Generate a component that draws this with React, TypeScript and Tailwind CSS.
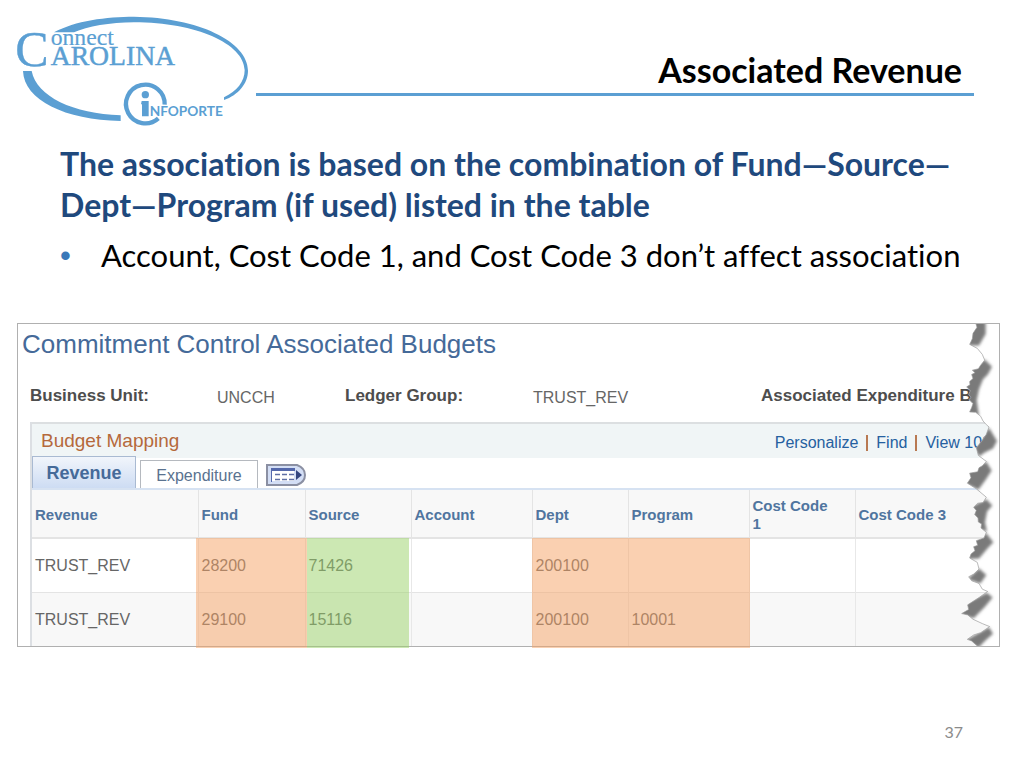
const columns = [
  { label: "Revenue", width: "w-[166px]" },
  { label: "Fund", width: "w-[107px]" },
  { label: "Source", width: "w-[106px]" },
  { label: "Account", width: "w-[121px]" },
  { label: "Dept", width: "w-[96px]" },
  { label: "Program", width: "w-[121px]" },
  { label: "Cost Code 1", width: "w-[106px]" },
  { label: "Cost Code 3", width: "w-auto" },
];

const rows = [
  ["TRUST_REV", "28200", "71426", "", "200100", "", "", ""],
  ["TRUST_REV", "29100", "15116", "", "200100", "10001", "", ""],
];

const links = ["Personalize", "Find", "View 100"];

const tear =
  "M231 42 L234 52 L222 70 L220 86 L212 103 L235 115 L250 133 L257 150 L245 165 L238 176 L220 180 L228 188 L218 193 L222 205 L212 214 L213 224 L203 230 L214 242 L209 252 L216 262 L210 268 L222 280 L218 292 L212 305 L230 306 L245 318 L252 332 L262 343 L270 350 L262 372 L250 390 L232 412 L238 435 L262 453 L250 466 L240 472 L236 484 L212 488 L216 502 L205 518 L232 535 L262 560 L252 576 L236 578 L224 590 L232 600 L227 612 L237 622 L238 634 L248 640 L246 652 L262 665 L255 682 L232 690 L236 704 L224 708 L228 720 L216 730 L212 742 L235 755 L240 775 L224 790 L209 798 L218 810 L240 818 L250 835 L266 842 L240 860 L206 882 L209 896 L188 908 L206 912 L222 925 L250 938 L272 947 L245 965 L224 972 L205 985 L218 990 L235 1005";

const shadows = [
  "M225 30 L260 36 L260 72 L240 106 L205 106 Z",
  "M257 148 L279 170 L267 192 L252 207 L240 237 L233 270 L240 317 L205 310 L195 225 L225 170 Z",
  "M270 352 L294 392 L282 414 L257 426 L240 438 L225 412 Z",
  "M262 454 L278 480 L260 508 L238 538 L200 520 L205 484 Z",
  "M262 566 L280 585 L264 603 L258 635 L264 663 L240 655 L215 590 Z",
  "M262 668 L283 695 L264 715 L240 743 L205 745 L220 690 Z",
  "M240 773 L262 793 L244 818 L205 805 Z",
  "M264 846 L281 860 L257 888 L224 922 L182 910 L205 875 Z",
  "M270 949 L282 968 L260 988 L238 1010 L200 988 Z",
];

function Logo() {
  return (
    <svg viewBox="0 0 768 390" className="h-[130px] w-64 shrink-0" fill="#5b9fd3" role="img" aria-label="Connect Carolina Infoporte">
      <path d="M162 97 C225 62 320 50 402 50 C595 52 744 125 744 212 C744 250 715 285 672 300 L672 292 C711 273 734 245 734 210 C732 132 590 67 402 67 C330 67 262 80 222 97 Z" />
      <path d="M69 213 H95 C110 290 220 341 362 346 V363 C195 360 72 300 69 213 Z" />
      <path d="M494 314 A58 58 0 1 0 475 355" fill="none" stroke="#5b9fd3" strokeWidth="13" />
      <circle cx="436" cy="284" r="11" />
      <path d="M425 303 H446 V349 H426 V313 H423 Z" />
      <g fontFamily="Liberation Serif, serif" stroke="#5b9fd3">
        <text x="46" y="198" fontSize="150" strokeWidth="1">C</text>
        <text x="152" y="134" fontSize="71" strokeWidth="0.5">onnect</text>
        <text x="152" y="196" fontSize="83" strokeWidth="1.5">AROLINA</text>
      </g>
      <text x="449" y="347" fontSize="41" fontWeight="700" fontFamily="Lato, sans-serif">NFOPORTE</text>
    </svg>
  );
}

function TornEdge() {
  return (
    <svg
      viewBox="180 42 120 963"
      preserveAspectRatio="none"
      className="pointer-events-none absolute top-0 right-0 h-full w-10"
      aria-hidden="true"
    >
      <defs>
        <clipPath id="beyond-tear">
          <path d={`${tear} L300 1005 L300 42 Z`} />
        </clipPath>
        <filter id="soft">
          <feGaussianBlur stdDeviation="5" />
        </filter>
      </defs>
      <path d={`${tear} L300 1005 L300 42 Z`} fill="#fff" />
      <g clipPath="url(#beyond-tear)">
        <g fill="#7a7a7a" filter="url(#soft)">
          {shadows.map((d) => (
            <path key={d} d={d} />
          ))}
        </g>
      </g>
      <path d={tear} fill="none" stroke="#999" strokeWidth="2" />
    </svg>
  );
}

function DownloadIcon() {
  return (
    <svg viewBox="0 0 40 22" className="h-[22px] w-10" aria-hidden="true">
      <path d="M1 1 H31 Q39 4 39 11 Q39 18 31 21 H1 Z" fill="#d3def5" stroke="#8b90a3" strokeWidth="2" />
      <path d="M5 4 H29 V7 H5 Z" fill="#5468ab" />
      <path d="M5 7 H28 V17 H5 Z" fill="#fff" />
      <path d="M5.500 7 V18" stroke="#5468ab" />
      <path d="M9 10.500 H28 M9 15.500 H28" stroke="#5f6fa5" strokeWidth="1.500" strokeDasharray="5 2" />
      <path d="M30 6 L36 11 L30 16 Z" fill="#34457f" />
    </svg>
  );
}

function BudgetPanel() {
  return (
    <section className="relative mt-[47px] mr-6 ml-[17px] border border-[#b0b0b0] bg-white font-['Liberation_Sans',sans-serif] text-base text-[#666]">
      <h2 className="pt-1 pl-1 text-[26px] leading-8 text-[#456a99]">Commitment Control Associated Budgets</h2>
      <dl className="mt-6 flex h-[38px] pl-3 leading-6 whitespace-nowrap">
        <dt className="w-[187px] text-[17px] font-bold text-[#4d4d4d]">Business Unit:</dt>
        <dd className="w-32 pt-0.5">UNCCH</dd>
        <dt className="w-[188px] text-[17px] font-bold text-[#4d4d4d]">Ledger Group:</dt>
        <dd className="w-[228px] pt-0.5">TRUST_REV</dd>
        <dt className="w-0 flex-1 text-[17px] font-bold text-[#4d4d4d]">Associated Expenditure B</dt>
      </dl>

      <div className="ml-3 border-l-2 border-[#dcdfe3]">
        <div className="flex h-9 items-center justify-between border-t-2 border-[#dcdfe1] bg-[#f0f5f6] pr-2 pl-[9px]">
          <h3 className="text-[19px] text-[#b5693c]">Budget Mapping</h3>
          <nav className="flex items-center gap-2 pt-1 text-[#2560a0]">
            {links.map((link, i) => (
              <span key={link} className="flex items-center gap-2">
                {i > 0 && <span className="h-4 w-0.5 bg-[#b87952]" />}
                <a href="#">{link}</a>
              </span>
            ))}
          </nav>
        </div>

        <div className="flex h-8 items-end border-b-2 border-[#d6e2f2]">
          <button className="h-8 w-[104px] border border-b-0 border-[#a9bad2] bg-linear-to-b from-[#f1f5fb] to-[#cddcf3] text-lg font-bold text-[#456a99]">
            Revenue
          </button>
          <button className="ml-1 h-7 w-[118px] border border-b-0 border-[#b5b9bf] bg-white pt-0.5 text-[#5a728f]">
            Expenditure
          </button>
          <button className="ml-2 pb-0.5" aria-label="Download">
            <DownloadIcon />
          </button>
        </div>

        <div className="relative">
          <table className="w-full table-fixed border-collapse text-left">
            <thead>
              <tr className="h-12 bg-[#f8f8f8]">
                {columns.map((col) => (
                  <th
                    key={col.label}
                    className={`${col.width} border-r border-b-2 border-[#e4e4e4] pt-0.5 pr-5 pl-[3px] text-[15px] leading-[18px] text-[#50759f] last:border-r-0 last:pr-0`}
                  >
                    {col.label}
                  </th>
                ))}
              </tr>
            </thead>
            <tbody>
              {rows.map((row) => (
                <tr key={row[1]} className="h-[54px] border-b border-[#e4e4e4] last:border-b-0 even:bg-[#f8f8f8]">
                  {row.map((cell, i) => (
                    <td key={i} className="border-r border-[#e8e8e8] pt-0.5 pl-[3px] last:border-r-0">
                      {cell}
                    </td>
                  ))}
                </tr>
              ))}
            </tbody>
          </table>
          {/* highlighted columns */}
          <div className="absolute top-12 -bottom-0.5 left-[164px] w-[111px] bg-[#f6a264]/50" />
          <div className="absolute top-12 -bottom-0.5 left-[275px] w-[102px] bg-[#9ad268]/50" />
          <div className="absolute top-12 -bottom-0.5 left-[500px] w-[218px] bg-[#f6a264]/50" />
        </div>
      </div>
      <TornEdge />
    </section>
  );
}

export default function App() {
  return (
    <main className="flex min-h-screen flex-col bg-white font-[Lato,sans-serif] [font-variant-ligatures:none]">
      <header className="flex">
        <Logo />
        <div className="mr-[50px] flex-1 pt-12">
          <h1 className="border-b-[3px] border-[#5b9fd3] pr-3 pb-px text-right text-[34px] leading-11 font-bold text-black">
            Associated Revenue
          </h1>
        </div>
      </header>

      <div className="mt-[13px] pr-10 pl-[60px]">
        <p className="text-[32px] leading-[41px] font-bold whitespace-nowrap text-[#1f497d]">
          The association is based on the combination of Fund—Source—
          <br />
          Dept—Program (if used) listed in the table
        </p>
        <ul className="mt-2.5">
          <li className="flex text-[31px] leading-[41px] whitespace-nowrap text-black">
            <span className="w-[41px] shrink-0 font-['Liberation_Sans',sans-serif] text-[#3a78b8]">•</span>
            Account, Cost Code 1, and Cost Code 3 don’t affect association
          </li>
        </ul>
      </div>

      <BudgetPanel />

      <footer className="mt-auto pr-[61px] pb-6 text-right text-base leading-6 text-[#8b8b8b]">37</footer>
    </main>
  );
}
